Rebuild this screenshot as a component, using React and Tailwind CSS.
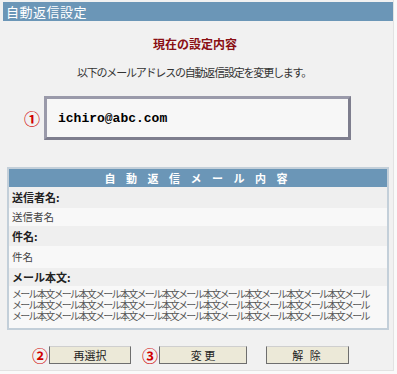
import React from 'react';

const jp = "font-['Noto_Sans_CJK_JP',sans-serif]";
const bodyLine = 'メール本文メール本文メール本文メール本文メール本文メール本文メール本文メール本文メール';

const Circled = ({ children }) => (
    <span className={`${jp} text-[16px] leading-none font-bold text-[#d00000]`}>{children}</span>
);

const Btn = ({ label, className }) => (
    <button className={`${jp} h-[18px] bg-[#ece9d8] border border-[#6e6e6e] border-t-[#cfcfcf] text-[11px] leading-none text-[#222] ${className}`}>
        {label}
    </button>
);

export default function App() {
    return (
        <div className="w-[397px] h-[374px] bg-[#fafafa]">
            <div className={`w-[394px] h-[371px] bg-[#f1f1f1] border-r border-b border-[#e2e2e2] pt-[2px] pl-[3px] ${jp}`}>
                {/* title bar */}
                <div className="w-[390px] h-[19px] bg-[#6b96b7] flex items-center pl-[3px] text-white text-[13px] leading-none tracking-[0.5px]">
                    自動返信設定
                </div>

                <div className="mt-[17px] text-center text-[12px] leading-none font-bold text-[#8a0f14] pr-[6px]">
                    現在の設定内容
                </div>
                <div className="mt-[17px] text-center text-[11px] leading-none text-[#333] tracking-[-1.2px] pr-[8px]">
                    以下のメールアドレスの自動返信設定を変更します。
                </div>

                {/* address */}
                <div className="mt-[18px] flex items-center">
                    <div className="w-[41px] flex justify-end pr-[4px]">
                        <Circled>①</Circled>
                    </div>
                    <div className="w-[307px] h-[44px] border-[3px] border-[#9a9aaa] border-b-[#7e7e8e] border-r-[#7e7e8e] bg-[#f7f7f7] flex items-center pl-[11px]">
                        <span className="font-['Liberation_Mono',monospace] text-[13px] leading-none text-black font-semibold">ichiro@abc.com</span>
                    </div>
                </div>

                {/* panel */}
                <div className="mt-[27px] ml-[4px] w-[382px] border-2 border-[#c3cfd9] bg-[#f7f7f7]">
                    <div className="h-[18px] bg-[#6b96b7] flex items-center justify-center text-white text-[11px] font-bold leading-none tracking-[4px]">
                        自 動 返 信 メ ー ル 内 容
                    </div>
                    <div className="h-[21px] bg-[#efefef] flex items-center pl-[3px] text-[11px] font-bold text-[#222] leading-none">送信者名:</div>
                    <div className="h-[18px] bg-[#f8f8f8] flex items-center pl-[3px] text-[10.5px] text-[#444] leading-none">送信者名</div>
                    <div className="h-[20px] bg-[#efefef] flex items-center pl-[3px] text-[11px] font-bold text-[#222] leading-none">件名:</div>
                    <div className="h-[22px] bg-[#f8f8f8] flex items-center pl-[3px] text-[10.5px] text-[#444] leading-none">件名</div>
                    <div className="h-[18px] bg-[#efefef] flex items-center pl-[3px] text-[11px] font-bold text-[#222] leading-none">メール本文:</div>
                    <div className="bg-[#f8f8f8] pl-[3px] pt-[2px] pb-[7px] text-[10px] leading-[11px] text-[#555] whitespace-nowrap overflow-hidden tracking-[-1.7px]">
                        <div>{bodyLine}</div>
                        <div>{bodyLine}</div>
                        <div>{bodyLine}</div>
                    </div>
                </div>

                {/* buttons */}
                <div className="mt-[16px] flex items-center">
                    <div className="w-[46px] flex justify-end pr-[1px]"><Circled>②</Circled></div>
                    <Btn label="再選択" className="w-[82px]" />
                    <div className="w-[28px] flex justify-end pr-[1px]"><Circled>③</Circled></div>
                    <Btn label="変 更" className="w-[88px]" />
                    <Btn label="解 除" className="w-[83px] ml-[19px] tracking-[2px]" />
                </div>
            </div>
        </div>
    );
}
